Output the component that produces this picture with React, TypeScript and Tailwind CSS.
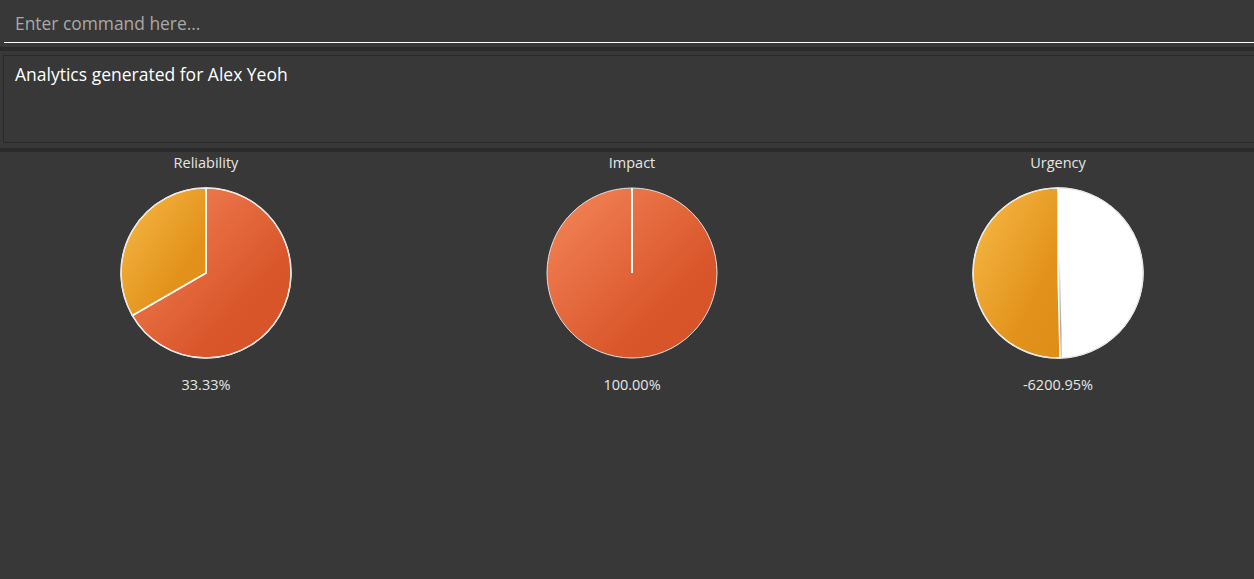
const FONT = { fontFamily: '"Open Sans", "Noto Sans", sans-serif' };

type Slice = { from: number; to: number; fill: string };

const R = 85;
const C = 86;

function pt(deg: number) {
    const a = (deg * Math.PI) / 180;
    return [C + R * Math.sin(a), C - R * Math.cos(a)];
}

function slicePath(from: number, to: number) {
    const [x1, y1] = pt(from);
    const [x2, y2] = pt(to);
    const large = to - from > 180 ? 1 : 0;
    return `M${C} ${C} L${x1} ${y1} A${R} ${R} 0 ${large} 1 ${x2} ${y2} Z`;
}

const Gradients = () => (
    <defs>
        <linearGradient id="orange" x1="0" y1="0" x2="1" y2="1">
            <stop offset="0%" stopColor="#f4875a" />
            <stop offset="70%" stopColor="#d9552a" />
            <stop offset="100%" stopColor="#d85327" />
        </linearGradient>
        <linearGradient id="yellow" x1="0" y1="0" x2="1" y2="1">
            <stop offset="0%" stopColor="#f6bb48" />
            <stop offset="70%" stopColor="#e2911a" />
            <stop offset="100%" stopColor="#df8e17" />
        </linearGradient>
        <linearGradient id="seam" x1="0" y1="0" x2="0" y2="1">
            <stop offset="0%" stopColor="#ffffff" />
            <stop offset="40%" stopColor="#c8c8c8" />
            <stop offset="75%" stopColor="#a8a8a8" />
            <stop offset="100%" stopColor="#d0d0d0" />
        </linearGradient>
    </defs>
);

const SPLIT = 178.6;

const Pie = ({ slices, seam }: { slices: Slice[]; seam?: boolean }) => {
    const [sx, sy] = pt(SPLIT);
    return (
        <svg width="172" height="172" viewBox="0 0 172 172">
            <Gradients />
            {slices.map((s, i) => (
                <path key={i} d={slicePath(s.from, s.to)} fill={s.fill} stroke="#ffffff" strokeWidth="1.5" strokeLinejoin="round" />
            ))}
            {seam && <line x1={C + 1.2} y1={C - 20} x2={sx + 1.2} y2={sy - 1} stroke="url(#seam)" strokeWidth="1.4" />}
            <circle cx={C} cy={C} r={R} fill="none" stroke="#e2e2e2" strokeWidth="1" />
        </svg>
    );
};

const ImpactPie = () => (
    <svg width="172" height="172" viewBox="0 0 172 172">
        <Gradients />
        <circle cx={C} cy={C} r={R} fill="url(#orange)" />
        <line x1={C} y1={C} x2={C} y2={1} stroke="#ffffff" strokeWidth="2" />
        <circle cx={C} cy={C} r={R} fill="none" stroke="#e2e2e2" strokeWidth="1" />
    </svg>
);

const ChartCol = ({ title, value, children }: { title: string; value: string; children: React.ReactNode }) => (
    <div className="flex flex-col items-center">
        <p className="text-[14.5px] leading-[19px] text-[#e6e6e6]">{title}</p>
        <div className="mt-[15px]">{children}</div>
        <p className="mt-[16px] text-[14.5px] leading-[19px] text-[#e6e6e6]">{value}</p>
    </div>
);

const App = () => {
    return (
        <div className="w-[1254px] h-[579px] bg-[#383838] overflow-hidden" style={FONT}>
            <div className="pl-[4px]">
                <div className="h-[43px] border-b border-white flex items-center pl-[11px] pt-[4px]">
                    <span className="text-[17.4px] text-[#a9a9a9]">Enter command here...</span>
                </div>
            </div>
            <div className="mt-[4px] h-[4px] bg-[#2b2b2b]" />
            <div className="pt-[4px] pl-[3px]">
                <div className="h-[88px] border border-r-0 border-[#2a2a2a] pl-[11px] pt-[6px]">
                    <p className="text-[17.5px] leading-[24px] text-white">Analytics generated for Alex Yeoh</p>
                </div>
            </div>
            <div className="mt-[5px] h-[4px] bg-[#2b2b2b]" />
            <div className="grid grid-cols-[412px_412px_412px] gap-[14px] pt-[1px]">
                <ChartCol title="Reliability" value="33.33%">
                    <Pie
                        slices={[
                            { from: 0, to: 240, fill: 'url(#orange)' },
                            { from: 240, to: 360, fill: 'url(#yellow)' },
                        ]}
                    />
                </ChartCol>
                <ChartCol title="Impact" value="100.00%">
                    <ImpactPie />
                </ChartCol>
                <ChartCol title="Urgency" value="-6200.95%">
                    <Pie
                        seam
                        slices={[
                            { from: 0, to: SPLIT, fill: '#ffffff' },
                            { from: SPLIT, to: 360, fill: 'url(#yellow)' },
                        ]}
                    />
                </ChartCol>
            </div>
        </div>
    );
};

export default App;
